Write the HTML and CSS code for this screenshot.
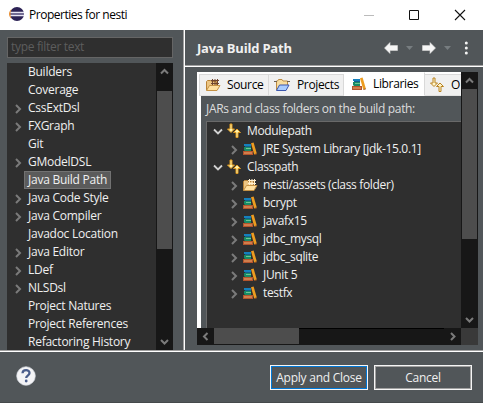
FILE: index.html
```html
<!DOCTYPE html>
<html lang="en">
<head>
<meta charset="utf-8">
<title>Properties for nesti</title>
<link rel="stylesheet" href="styles.css">
</head>
<body>
<svg class="defs" width="0" height="0" aria-hidden="true">
  <symbol id="right" viewBox="0 0 8 10"><path d="M2 1l4 4-4 4" fill="none" stroke="#7b7b7b" stroke-width="2"/></symbol>
  <symbol id="down" viewBox="0 0 10 8"><path d="M1 1.500l4 4 4-4" fill="none" stroke="#d2d2d2" stroke-width="1.800"/></symbol>
  <symbol id="books" viewBox="0 0 16 14">
    <path d="M2 2h7v2H2z" fill="#1580bd"/><path d="M3 4h6v1H3z" fill="#175e8c"/>
    <path d="M2 5h7v4H3l-1-1z" fill="#198b65"/><path d="M4 6h5v1H4z" fill="#6fc495"/>
    <path d="M1 9h10v4H1z" fill="#b4542c"/><path d="M2 10h8v2H2z" fill="#d07e4c"/>
    <path d="M9 1.300l2.600-.7 3.200 11-2.600 1z" fill="#ed9c20"/><path d="M12.500 12.500l2.400-.7" stroke="#9b5420"/>
  </symbol>
  <symbol id="path" viewBox="0 0 16 16">
    <path d="M4 1h2v5h2.500L5 9.500 1.500 6H4z" fill="var(--fill)" stroke="var(--edge)"/>
    <path d="M10 14.500v-5H7.500L11 6l3.500 3.500H12v5z" fill="var(--fill)" stroke="var(--edge)"/>
  </symbol>
  <symbol id="package" viewBox="0 0 16 14">
    <path d="M1.500 12V3.500l1-1h3l1 1h5V12z" fill="#ecc583" stroke="#b98236"/>
    <path d="M6 2.500h8M6 5.500h8M7.500 1v6M10 1v6M12.500 1v6" fill="none" stroke="var(--weave, #70452f)"/>
    <path d="M1.500 12.500l3-5h10.500l-3 5z" fill="#ffe0a0" stroke="#c59245"/>
  </symbol>
  <symbol id="project" viewBox="0 0 16 14">
    <path d="M2.500 12V3h1l1-1.500h3.500l1 1.500h4.500v5" fill="#f7dda0" stroke="#bd8b40"/><path d="M0 3.500h3M13 3.500h3" stroke="#6c6050"/>
    <path d="M2.500 12.500l3-5.500h9.500l-3 5.500z" fill="#a8ccff" stroke="#3c57ad"/>
  </symbol>
  <symbol id="back" viewBox="0 0 16 14"><path d="M1.500 7l5.500-5.500v3h7.500v5H7v3z" fill="#f6f6f6" stroke="#d8d8d8" stroke-width=".6"/></symbol>
</svg>

<header class="titlebar">
  <svg class="logo" viewBox="0 0 16 16"><circle cx="8" cy="8" r="7" fill="#2c2255"/><path d="M2.500 3C-.8 6-.8 10 2.500 13 1.300 9.500 1.300 6.500 2.500 3z" fill="#e88b2d"/><path d="M1.500 6.500h13.500M1.500 9.500h13.500" stroke="#e8e5f3" stroke-width="1.300"/><path d="M2 8h13" stroke="#8d88ad" stroke-width="1"/></svg>
  <span class="caption">Properties for nesti</span>
  <svg class="window-controls" width="102" height="12" viewBox="0 0 102 12"><path d="M0 6.500h10" stroke="#bbb"/><path d="M45.500 1.500h9v9h-9z" fill="none" stroke="#111"/><path d="M91 1l10 10M101 1L91 11" stroke="#111" stroke-width="1.100"/></svg>
</header>

<main class="main">
  <aside class="sidebar">
    <div class="filter">type filter text</div>
    <div class="nav">
      <ul class="nav-list">
        <li>Builders</li>
        <li>Coverage</li>
        <li class="parent"><svg><use href="#right"/></svg>CssExtDsl</li>
        <li class="parent"><svg><use href="#right"/></svg>FXGraph</li>
        <li>Git</li>
        <li class="parent"><svg><use href="#right"/></svg>GModelDSL</li>
        <li class="selected"><span>Java Build Path</span></li>
        <li class="parent"><svg><use href="#right"/></svg>Java Code Style</li>
        <li class="parent"><svg><use href="#right"/></svg>Java Compiler</li>
        <li>Javadoc Location</li>
        <li class="parent"><svg><use href="#right"/></svg>Java Editor</li>
        <li class="parent"><svg><use href="#right"/></svg>LDef</li>
        <li class="parent"><svg><use href="#right"/></svg>NLSDsl</li>
        <li>Project Natures</li>
        <li>Project References</li>
        <li>Refactoring History</li>
      </ul>
      <div class="vscroll nav-scroll">
        <svg viewBox="0 0 17 17"><path d="M5 10.500L8.500 7l3.500 3.500" /></svg><i></i><svg class="end" viewBox="0 0 17 17"><path d="M5 7l3.500 3.500L12 7"/></svg>
      </div>
    </div>
  </aside>

  <section class="page">
    <div class="page-head">
      <h1>Java Build Path</h1>
      <svg class="tools" width="90" height="16" viewBox="0 0 90 16"><use href="#back" x="0" y="1" width="16" height="14"/><path d="M23 6h7l-3.500 4zM61 6h7l-3.500 4z" fill="#777d80"/><use href="#back" transform="translate(54 1) scale(-1 1)" width="16" height="14"/><g fill="#f4f4f4"><circle cx="83.300" cy="3" r="1.500"/><circle cx="83.300" cy="8" r="1.500"/><circle cx="83.300" cy="13" r="1.500"/></g></svg>
    </div>
    <div class="pane">
      <div class="viewport">
        <div class="tabs">
          <div class="tab source"><svg><use href="#package"/></svg>Source</div>
          <div class="tab projects"><svg><use href="#project"/></svg>Projects</div>
          <div class="tab active"><svg><use href="#books"/></svg>Libraries</div>
          <div class="tab order"><svg class="path-light"><use href="#path"/></svg>O</div>
        </div>
        <div class="tab-body">
          <div class="hint">JARs and class folders on the build path:</div>
          <ul class="tree">
            <li><svg class="down"><use href="#down"/></svg><svg class="icon"><use href="#path"/></svg><span>Modulepath</span></li>
            <li class="child"><svg class="right"><use href="#right"/></svg><svg class="icon"><use href="#books"/></svg><span>JRE System Library [jdk-15.0.1]</span></li>
            <li><svg class="down"><use href="#down"/></svg><svg class="icon"><use href="#path"/></svg><span>Classpath</span></li>
            <li class="child"><svg class="right"><use href="#right"/></svg><svg class="icon"><use href="#package"/></svg><span>nesti/assets (class folder)</span></li>
            <li class="child"><svg class="right"><use href="#right"/></svg><svg class="icon"><use href="#books"/></svg><span>bcrypt</span></li>
            <li class="child"><svg class="right"><use href="#right"/></svg><svg class="icon"><use href="#books"/></svg><span>javafx15</span></li>
            <li class="child"><svg class="right"><use href="#right"/></svg><svg class="icon"><use href="#books"/></svg><span>jdbc_mysql</span></li>
            <li class="child"><svg class="right"><use href="#right"/></svg><svg class="icon"><use href="#books"/></svg><span>jdbc_sqlite</span></li>
            <li class="child"><svg class="right"><use href="#right"/></svg><svg class="icon"><use href="#books"/></svg><span>JUnit 5</span></li>
            <li class="child"><svg class="right"><use href="#right"/></svg><svg class="icon"><use href="#books"/></svg><span>testfx</span></li>
          </ul>
        </div>
      </div>
      <div class="vscroll pane-scroll">
        <svg viewBox="0 0 17 17"><path d="M5 10.500L8.500 7l3.500 3.500"/></svg><i></i><svg class="end" viewBox="0 0 17 17"><path d="M5 7l3.500 3.500L12 7"/></svg>
      </div>
      <div class="hscroll"><svg viewBox="0 0 17 17"><path d="M10.500 5L7 8.500l3.500 3.500"/></svg><i></i><b></b><svg class="end" viewBox="0 0 17 17"><path d="M7 5l3.500 3.500L7 12"/></svg></div>
      <div class="corner"></div>
    </div>
  </section>
</main>

<footer class="footer">
  <svg class="help" viewBox="0 0 20 20"><circle cx="10" cy="10" r="9.300" fill="#f4f4f6" stroke="#d4d8df" stroke-width=".7"/><path d="M6.500 7.300C6.700 3 13.500 3.200 13.500 7c0 2.600-3.300 2.600-3.300 5" fill="none" stroke="#4b5e8b" stroke-width="2.300"/><circle cx="10.200" cy="15" r="1.400" fill="#4b5e8b"/></svg>
  <div class="button primary">Apply and Close</div>
  <div class="button">Cancel</div>
</footer>
</body>
</html>
```
FILE: styles.css
```css
* { box-sizing: border-box; }
body {
  margin: 0; width: 483px; height: 403px; overflow: hidden;
  display: grid; grid-template-rows: 30px 322px 51px;
  background: #515659; color: #f0f0f0;
  font: 12px/18px "Open Sans", "Noto Sans", sans-serif;
  letter-spacing: -.25px;
}
ul { list-style: none; margin: 0; padding: 0; }
svg { display: block; flex: none; }
.defs { position: absolute; }
.titlebar { background: #fff; color: #000; display: flex; align-items: center; padding: 0 17px 0 9px; }
.logo { width: 16px; height: 16px; margin: -2px 4px 0 0; }
.caption { margin-top: -1px; letter-spacing: -.48px; }
.window-controls { margin-left: auto; }

.main { display: grid; grid-template-columns: 185px 298px; border-bottom: 1px solid #fff; box-shadow: inset 0 -1px #a0a0a0; }
.sidebar { padding: 7px 10px 0 7px; border-right: 1px solid #fff; box-shadow: inset -1px 0 #a0a0a0; height: 320px; }
.filter { width: 166px; height: 21px; line-height: 17px; padding-left: 3px; border: 1px solid #656565; background: #2f2f2f; color: #5d5d5d; letter-spacing: -.32px; }
.nav { width: 166px; height: 287px; margin-top: 5px; background: #2f2f2f; display: flex; overflow: hidden; }
.nav-list { width: 149px; }
.nav-list li { height: 18px; padding-left: 21px; display: flex; white-space: nowrap; }
.nav-list .parent { padding-left: 7px; }
.nav-list .parent svg { width: 8px; height: 10px; margin: 5px 6px 0 0; }
.nav-list .selected { padding-left: 17px; }
.selected span { border: 1px solid #727272; background: #5b5b5b; width: 87px; padding-left: 3px; line-height: 16px; }
.vscroll { width: 17px; background: #171717; display: flex; flex-direction: column; align-items: center; }
.vscroll svg, .hscroll svg { width: 17px; height: 17px; fill: none; stroke: #7b7b7b; stroke-width: 2; }
.vscroll i { width: 15px; background: #4d4d4d; }
.vscroll .end { margin-top: auto; }
.nav-scroll i { height: 158px; margin-top: 11px; }

.page { display: grid; grid-template-rows: 37px 1fr; height: 320px; }
.page-head { display: flex; align-items: center; padding: 0 12px 2px; border-bottom: 1px solid #fff; box-shadow: inset 0 -1px #a0a0a0; }
h1 { margin: 1px 0 0; font-size: 13px; font-weight: 700; letter-spacing: -.2px; white-space: nowrap; }
.tools { margin: 2px 0 0 auto; position: relative; left: 2px; }
.pane { margin: 5px 0 0 12px; display: grid; grid-template-columns: 264px 17px; grid-template-rows: 256px 17px; }
.viewport { overflow: hidden; background: #fff; }
.tabs { height: 24px; width: 320px; padding-left: 2px; display: flex; align-items: flex-end; color: #000; letter-spacing: -.35px; }
.tab { height: 22px; flex: none; display: flex; align-items: center; background: #f0f0f0; border: 1px solid #d9d9d9; border-bottom-color: #e2e2e2; border-left: 0; padding: 0; white-space: nowrap; }
.tab svg { width: 16px; height: 14px; }
.source { width: 70px; border-left: 1px solid #d9d9d9; padding-left: 5px; }
.source svg { margin-right: 6px; }
.projects { width: 75px; padding-left: 5px; }
.projects svg { margin-right: 7px; }
.tab.active { width: 81px; height: 24px; background: #fff; border-color: #fff; border-right: 1px solid #d9d9d9; padding-left: 7px; }
.active svg { margin-right: 6px; }
.order { width: 60px; padding-left: 4px; }
.tab .path-light { height: 16px; margin-right: 6px; --fill: #fff5ca; --edge: #b98322; }
.tab-body { margin-left: 4px; height: 232px; background: #515659; padding: 4px 0 0 5px; }
.hint { height: 21px; color: #dedede; white-space: nowrap; letter-spacing: -.34px; }
.tree { height: 207px; background: #2f2f2f; border: 1px solid #696969; border-width: 1px 0 0 1px; letter-spacing: -.34px; }
.tree li { height: 18px; display: flex; padding-left: 6px; white-space: nowrap; }
.tree .child { padding-left: 23px; }
.tree .down { width: 10px; height: 8px; margin: 6px 3px 0 0; }
.tree .right { width: 8px; height: 10px; margin: 5px 4px 0 0; }
.tree .icon { width: 16px; height: 16px; margin: 1px 5px 0 0; --fill: #fff2a9; --edge: #dd981f; --weave: #fff0d0; }
.hscroll { background: #171717; display: flex; }
.hscroll i { width: 85px; height: 16px; background: #4d4d4d; }
.hscroll b { width: 145px; height: 1px; background: #000; }
.hscroll .end { margin-left: auto; }
.corner { background: #393939; }
.pane-scroll i { height: 150px; }

.footer { display: flex; padding: 13px 11px 0 16px; border-bottom: 1px solid #45494b; }
.help { width: 20px; height: 20px; margin: 1px auto 0 0; }
.button { width: 98px; height: 25px; line-height: 23px; text-align: center; border: 1px solid #f5f5f5; box-shadow: inset 0 0 0 1px #a0a0a0; margin-left: 6px; white-space: nowrap; }
.primary { box-shadow: inset 0 0 0 1px #0078d7; }
```
